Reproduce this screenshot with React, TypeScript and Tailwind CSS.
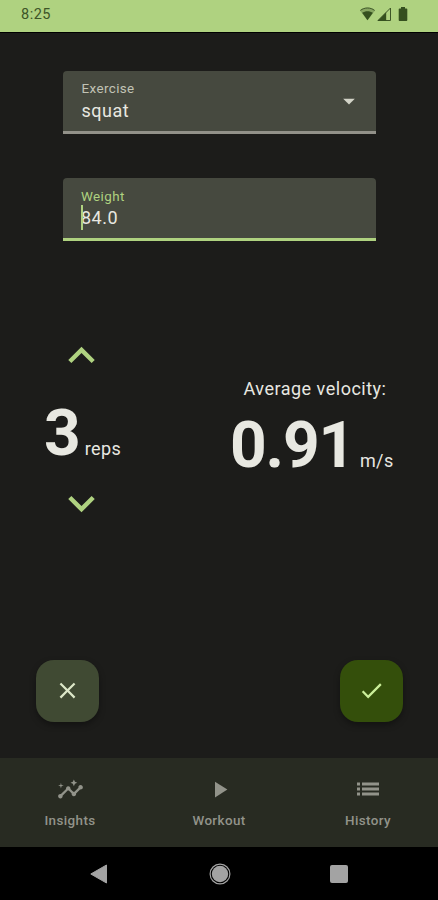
import type { ReactNode } from 'react'
import {
  MdArrowDropDown,
  MdCheck,
  MdClose,
  MdInsights,
  MdKeyboardArrowDown,
  MdKeyboardArrowUp,
  MdPlayArrow,
} from 'react-icons/md'

function StatusBar() {
  return (
    <header className="flex h-[33px] items-start justify-between border-b border-black bg-[#afd280] pl-[21px] pr-[30px] text-[#3d5527]">
      <span className="mt-[5px] text-[14.500px] leading-5 tracking-[0.5px]">8:25</span>
      <div className="mt-[6px] flex">
        <svg width="17" height="16" viewBox="0 0 18 16">
          <path d="M1 4.2C5.600 0.200 12.400 0.200 17 4.200L9 14.500z" fill="#3d5527" fillOpacity="0.35" />
          <path d="M1.500 4.200C5.800 0.800 12.200 0.800 16.500 4.200" fill="none" stroke="#3d5527" strokeWidth="1" />
          <path d="M3.300 6.800C6.500 4.500 11.500 4.500 14.700 6.800L9 14.500z" fill="#35501f" />
        </svg>
        <svg className="ml-px" width="15" height="16" viewBox="0 0 15 16">
          <path d="M1 14.500L13.500 2v12.500z" fill="none" stroke="#3d5527" strokeWidth="1" />
          <path d="M0.500 15L9.200 6.200V15z" fill="#35501f" />
        </svg>
        <svg className="ml-[6px]" width="10" height="16" viewBox="0 0 10 16">
          <path d="M3 1h4v1.500h1.500q.8 0 .8.800V14q0 1-.8 1h-7q-.8 0-.8-1V3.300q0-.8.800-.8H3z" fill="#35501f" />
        </svg>
      </div>
    </header>
  )
}

function NavItem({ label, children }: { label: string; children: ReactNode }) {
  return (
    <div className="flex w-[149px] shrink-0 flex-col items-center pt-[17px]">
      <div className="flex h-[28px] items-center">{children}</div>
      <span className="mt-[9px] text-[13.400px] font-medium leading-[18px] tracking-[0.4px]">{label}</span>
    </div>
  )
}

export default function App() {
  return (
    <div className="flex h-[900px] w-[438px] flex-col overflow-hidden bg-[#1c1c1a] font-['Roboto',sans-serif] text-[#e8e8e1]">
      <StatusBar />

      <main className="flex h-[725px] flex-col">
        <div className="ml-[63px] mt-[38px] flex h-[63px] w-[313px] items-center justify-between rounded-t-[4px] border-b-[3px] border-[#929189] bg-[#46493f] pl-[18.500px] pr-[13px]">
          <div className="flex flex-col pt-px">
            <span className="text-[13.400px] leading-4 tracking-[0.4px] text-[#c1c3b5]">Exercise</span>
            <span className="mt-[3px] text-[18px] leading-[22px] tracking-[0.5px]">squat</span>
          </div>
          <MdArrowDropDown className="size-[28px] text-[#d3d4c8]" />
        </div>

        <div className="ml-[63px] mt-[44px] flex h-[63px] w-[313px] flex-col rounded-t-[4px] border-b-[3px] border-[#afd280] bg-[#46493f] pl-[18px] pt-[11px]">
          <span className="text-[13.400px] leading-4 tracking-[0.4px] text-[#afd280]">Weight</span>
          <div className="relative mt-[2px] text-[18px] leading-[22px] tracking-[0.5px]">
            84.0
            <span className="absolute -top-[2px] left-0 h-[25px] w-[2px] bg-[#afd280]" />
          </div>
        </div>

        <div className="mt-[88px] flex h-[214px]">
          <div className="flex w-[162px] flex-col items-center">
            <MdKeyboardArrowUp className="size-[53px] text-[#afd280]" />
            <div className="flex h-[95px] w-full items-baseline pl-[44px]">
              <span className="text-[64px] font-bold leading-[104px]">3</span>
              <span className="ml-[4px] text-[18px] tracking-[0.4px]">reps</span>
            </div>
            <MdKeyboardArrowDown className="size-[53px] text-[#afd280]" />
          </div>

          <div className="flex flex-1 flex-col pl-[68px] pt-[48px]">
            <span className="pl-[13.500px] text-[18px] leading-6 tracking-[0.5px]">Average velocity:</span>
            <div className="flex items-baseline">
              <span className="text-[64px] font-bold leading-[89px] tracking-[-1.200px]">0.91</span>
              <span className="ml-[6px] text-[18px] tracking-[0.4px]">m/s</span>
            </div>
          </div>
        </div>

        <div className="mt-[116.500px] flex justify-between pl-[36px] pr-[35.500px]">
          <button className="flex size-[62.500px] items-center justify-center rounded-[18px] bg-[#404a33] text-[#dce7c8] shadow-[0_3px_6px_rgba(0,0,0,0.35)]">
            <MdClose className="size-[27px]" />
          </button>
          <button className="flex size-[62.500px] items-center justify-center rounded-[18px] bg-[#344f0b] text-[#cbef9a] shadow-[0_3px_6px_rgba(0,0,0,0.35)]">
            <MdCheck className="size-[27px]" />
          </button>
        </div>
      </main>

      <nav className="flex h-[89px] justify-center bg-[#282b22] text-[#92938a]">
        <NavItem label="Insights">
          <MdInsights className="size-[27px]" />
        </NavItem>
        <NavItem label="Workout">
          <MdPlayArrow className="size-[27px]" />
        </NavItem>
        <NavItem label="History">
          <svg width="22" height="14" viewBox="0 0 22 14" fill="currentColor">
            <path d="M0 .5h3v3H0zM0 5.500h3v3H0zM0 10.500h3v3H0zM5 .5h17v3H5zM5 5.500h17v3H5zM5 10.500h17v3H5z" />
          </svg>
        </NavItem>
      </nav>

      <footer className="flex h-[53px] items-center justify-center bg-black text-[#a3a3a3]">
        <svg width="18" height="20" viewBox="0 0 18 20" fill="currentColor">
          <path d="M16.500 1v18L.8 10z" stroke="currentColor" strokeLinejoin="round" />
        </svg>
        <svg className="ml-[101px]" width="22" height="22" viewBox="0 0 22 22" fill="currentColor">
          <circle cx="11" cy="11" r="8.200" />
          <circle cx="11" cy="11" r="9.900" fill="none" stroke="currentColor" strokeWidth="1.200" />
        </svg>
        <span className="ml-[99px] size-[18px] rounded-[2px] bg-[#a3a3a3]" />
      </footer>
    </div>
  )
}
